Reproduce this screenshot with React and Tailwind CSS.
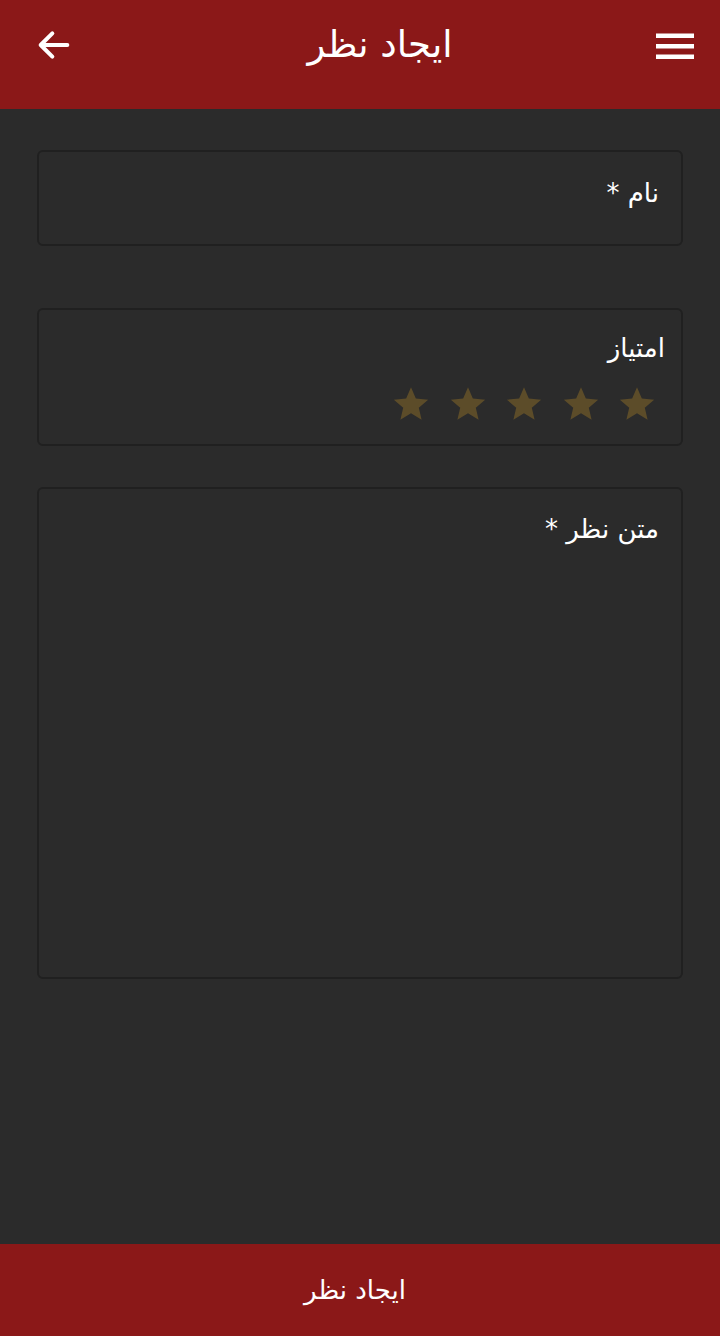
import React from "react";

function Star() {
  return (
    <svg width="38" height="36" viewBox="0 0 24 23" className="block">
      <path d="M12 0.8l3.09 7.26 7.86.66-5.97 5.16 1.8 7.68L12 17.44 5.22 21.56l1.8-7.68L1.05 8.72l7.86-.66z" fill="#5c4c29" />
    </svg>
  );
}

export default function App() {
  const font = { fontFamily: '"DejaVu Sans", "Noto Sans", sans-serif' };
  return (
    <div dir="rtl" className="w-[720px] h-[1336px] bg-[#2b2b2b] flex flex-col text-white" style={font}>
      <header className="h-[109px] bg-[#8b1818] flex items-center justify-between px-[26px] pb-[20px] shrink-0">
        <svg width="38" height="26" viewBox="0 0 38 26" className="mt-[2px]">
          <rect x="0" y="0.5" width="38" height="4.5" fill="#fff" />
          <rect x="0" y="11" width="38" height="4.5" fill="#fff" />
          <rect x="0" y="21.5" width="38" height="4.5" fill="#fff" />
        </svg>
        <div className="text-[37px] leading-none ml-[30px]">ایجاد نظر</div>
        <svg width="40" height="40" viewBox="0 0 24 24" className="ml-[8px]">
          <path d="M20 12H5M11 5l-7 7 7 7" fill="none" stroke="#fff" strokeWidth="2.4" strokeLinecap="round" strokeLinejoin="round" />
        </svg>
      </header>
      <main className="flex-1 flex flex-col px-[37px] pt-[41px]">
        <div className="h-[96px] border-2 border-[#202020] rounded-[6px] pr-[22px] pt-[28px]">
          <div className="text-[26px] leading-none">نام *</div>
        </div>
        <div className="mt-[62px] h-[138px] border-2 border-[#202020] rounded-[6px] pr-[16px] pt-[25px]">
          <div className="text-[26px] leading-none">امتیاز</div>
          <div className="flex gap-[18.5px] mt-[25px] pr-[9px]">
            <Star /><Star /><Star /><Star /><Star />
          </div>
        </div>
        <div className="mt-[41px] h-[492px] border-2 border-[#202020] rounded-[6px] pr-[22px] pt-[27px]">
          <div className="text-[26px] leading-none">متن نظر *</div>
        </div>
      </main>
      <footer className="h-[92px] bg-[#8b1818] flex items-center justify-center shrink-0">
        <div className="text-[26px] leading-none mr-[10px]">ایجاد نظر</div>
      </footer>
    </div>
  );
}
